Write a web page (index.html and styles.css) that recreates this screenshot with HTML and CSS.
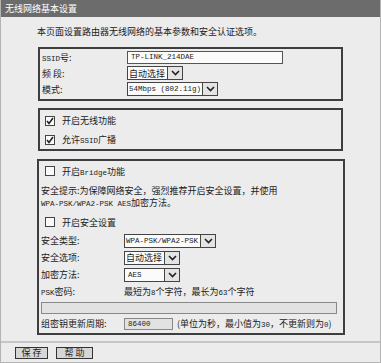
FILE: index.html
```html
<!DOCTYPE html>
<html lang="zh-CN">
<head>
  <meta charset="UTF-8">
  <title>无线网络基本设置</title>
  <link rel="stylesheet" href="styles.css">
</head>
<body>
  <div class="page">
    <div class="title">无线网络基本设置</div>

    <div class="content">
      <p class="intro">本页面设置路由器无线网络的基本参数和安全认证选项。</p>

      <div class="box box-basic">
        <div class="row">
          <span class="label"><span class="en">SSID</span>号:</span>
          <div class="input ssid"><span class="en">TP-LINK_214DAE</span></div>
        </div>
        <div class="row">
          <span class="label">频 段:</span>
          <div class="select">
            <span class="val">自动选择</span>
            <span class="btn"><svg width="9" height="6" viewBox="0 0 9 6"><path d="M1 1 L4.5 4.5 L8 1" fill="none" stroke="#222" stroke-width="1.6"/></svg></span>
          </div>
        </div>
        <div class="row">
          <span class="label">模式:</span>
          <div class="select">
            <span class="val mode"><span class="en">54Mbps (802.11g)</span></span>
            <span class="btn"><svg width="9" height="6" viewBox="0 0 9 6"><path d="M1 1 L4.5 4.5 L8 1" fill="none" stroke="#222" stroke-width="1.6"/></svg></span>
          </div>
        </div>
      </div>

      <div class="box box-switch">
        <label class="check-row">
          <span class="check on"><svg width="8" height="8" viewBox="0 0 8 8"><path d="M1 4 L3 6.5 L7 1" fill="none" stroke="#222" stroke-width="1.6"/></svg></span>
          <span>开启无线功能</span>
        </label>
        <label class="check-row">
          <span class="check on"><svg width="8" height="8" viewBox="0 0 8 8"><path d="M1 4 L3 6.5 L7 1" fill="none" stroke="#222" stroke-width="1.6"/></svg></span>
          <span>允许<span class="en">SSID</span>广播</span>
        </label>
      </div>

      <div class="box box-sec">
        <label class="check-row bridge">
          <span class="check"></span>
          <span>开启<span class="en">Bridge</span>功能</span>
        </label>
        <p class="hint">安全提示:为保障网络安全，强烈推荐开启安全设置，并使用<br><span class="en">WPA-PSK/WPA2-PSK AES</span>加密方法。</p>
        <label class="check-row secure">
          <span class="check"></span>
          <span>开启安全设置</span>
        </label>
        <div class="row first">
          <span class="label">安全类型:</span>
          <div class="select">
            <span class="val type"><span class="en">WPA-PSK/WPA2-PSK</span></span>
            <span class="btn"><svg width="9" height="6" viewBox="0 0 9 6"><path d="M1 1 L4.5 4.5 L8 1" fill="none" stroke="#222" stroke-width="1.6"/></svg></span>
          </div>
        </div>
        <div class="row">
          <span class="label">安全选项:</span>
          <div class="select">
            <span class="val">自动选择</span>
            <span class="btn"><svg width="9" height="6" viewBox="0 0 9 6"><path d="M1 1 L4.5 4.5 L8 1" fill="none" stroke="#222" stroke-width="1.6"/></svg></span>
          </div>
        </div>
        <div class="row">
          <span class="label">加密方法:</span>
          <div class="select">
            <span class="val aes"><span class="en">AES</span></span>
            <span class="btn"><svg width="9" height="6" viewBox="0 0 9 6"><path d="M1 1 L4.5 4.5 L8 1" fill="none" stroke="#222" stroke-width="1.6"/></svg></span>
          </div>
        </div>
        <div class="row">
          <span class="label"><span class="en">PSK</span>密码:</span>
          <span>最短为<span class="en">8</span>个字符，最长为<span class="en">63</span>个字符</span>
        </div>
        <div class="input psk"></div>
        <div class="row">
          <span class="label">组密钥更新周期:</span>
          <div class="input period"><span class="en">86400</span></div>
          <span class="unit">(单位为秒，最小值为<span class="en">30</span>，不更新则为<span class="en">0</span>)</span>
        </div>
      </div>
    </div>

    <div class="footer">
      <button class="btn-save">保 存</button>
      <button class="btn-help">帮 助</button>
    </div>
  </div>
</body>
</html>
```

FILE: styles.css
```css
* {
  box-sizing: border-box;
}
body {
  margin: 0;
  font-family: "Noto Sans CJK SC", "Noto Sans", sans-serif;
  font-size: 9px;
  color: #222;
  background: #ececec;
}
.page {
  width: 381px;
  height: 363px;
  border: 1px solid #b4b4b4;
  border-top: none;
  background: #ececec;
  display: flex;
  flex-direction: column;
}
.en {
  font-family: "Liberation Mono", monospace;
  font-size: 7.5px;
}
.title {
  height: 17px;
  line-height: 17px;
  background: #6c6c6c;
  color: #fff;
  padding-left: 4px;
  font-size: 9px;
}
.content {
  flex: 1;
}
.intro {
  margin: 9px 0 0 36px;
  line-height: 12px;
}
.box {
  border: 2px solid #3e3e3e;
  margin-left: 37px;
  width: 305px;
}
.box-basic {
  margin-top: 9px;
  padding: 0 2px 2px 2px;
}
.box-switch {
  margin-top: 7px;
  padding: 1px 5px 2px 5px;
  height: 43px;
}
.box-sec {
  margin-top: 8px;
  margin-left: 36px;
  width: 308px;
  padding: 2px 2px 0 2px;
  height: 176px;
}
.row {
  display: flex;
  align-items: center;
  height: 16px;
  white-space: nowrap;
}
.box-basic .label {
  width: 85px;
}
.box-sec .label {
  width: 83px;
}
.box-sec .row {
  height: 17px;
}
.input {
  height: 13px;
  border: 1px solid #555;
  background: #fbfbfb;
  display: flex;
  align-items: center;
  padding-left: 3px;
}
.ssid {
  width: 156px;
}
.select {
  display: flex;
  height: 14px;
}
.select .val {
  border: 1px solid #444;
  background: #fbfbfb;
  display: flex;
  align-items: center;
  padding-left: 1px;
  width: 41px;
  overflow: hidden;
  white-space: nowrap;
}
.select .val.mode {
  width: 76px;
  padding-left: 1px;
}
.select .val.type {
  width: 77px;
  padding-left: 1px;
}
.select .val.aes {
  padding-left: 3px;
}
.select .btn {
  width: 15px;
  border: 1px solid #444;
  border-left: none;
  background: #e4e4e4;
  display: flex;
  align-items: center;
  justify-content: center;
}
.check-row {
  display: flex;
  align-items: center;
  height: 19px;
  gap: 7px;
}
.check {
  width: 10px;
  height: 10px;
  border: 1px solid #444;
  background: #fafafa;
  display: flex;
  align-items: center;
  justify-content: center;
}
.box-sec .check-row {
  height: 16px;
  padding-left: 4px;
}
.hint {
  margin: 6px 0 0 0;
  line-height: 12px;
}
.box-sec .check-row.secure {
  margin-top: 4px;
}
.box-sec .row.first {
  margin-top: 2px;
}
.psk {
  height: 12px;
  margin: 2px 4px 1px 0;
  background: #e2e2e2;
  border-color: #888;
}
.period {
  width: 49px;
  height: 12px;
  background: #e2e2e2;
  border-color: #888;
  padding-left: 3px;
}
.unit {
  margin-left: 4px;
}
.footer {
  height: 21px;
  border-top: 2px solid #c6c6c6;
  display: flex;
  align-items: center;
  gap: 8px;
  padding-left: 14px;
}
.footer button {
  font-family: "Noto Sans CJK SC", sans-serif;
  font-size: 9px;
  height: 12px;
  padding: 0;
  line-height: 10px;
  border: 1px solid #333;
  background: #d6d6d6;
  color: #222;
}
.btn-save {
  width: 33px;
}
.btn-help {
  width: 37px;
}
```
